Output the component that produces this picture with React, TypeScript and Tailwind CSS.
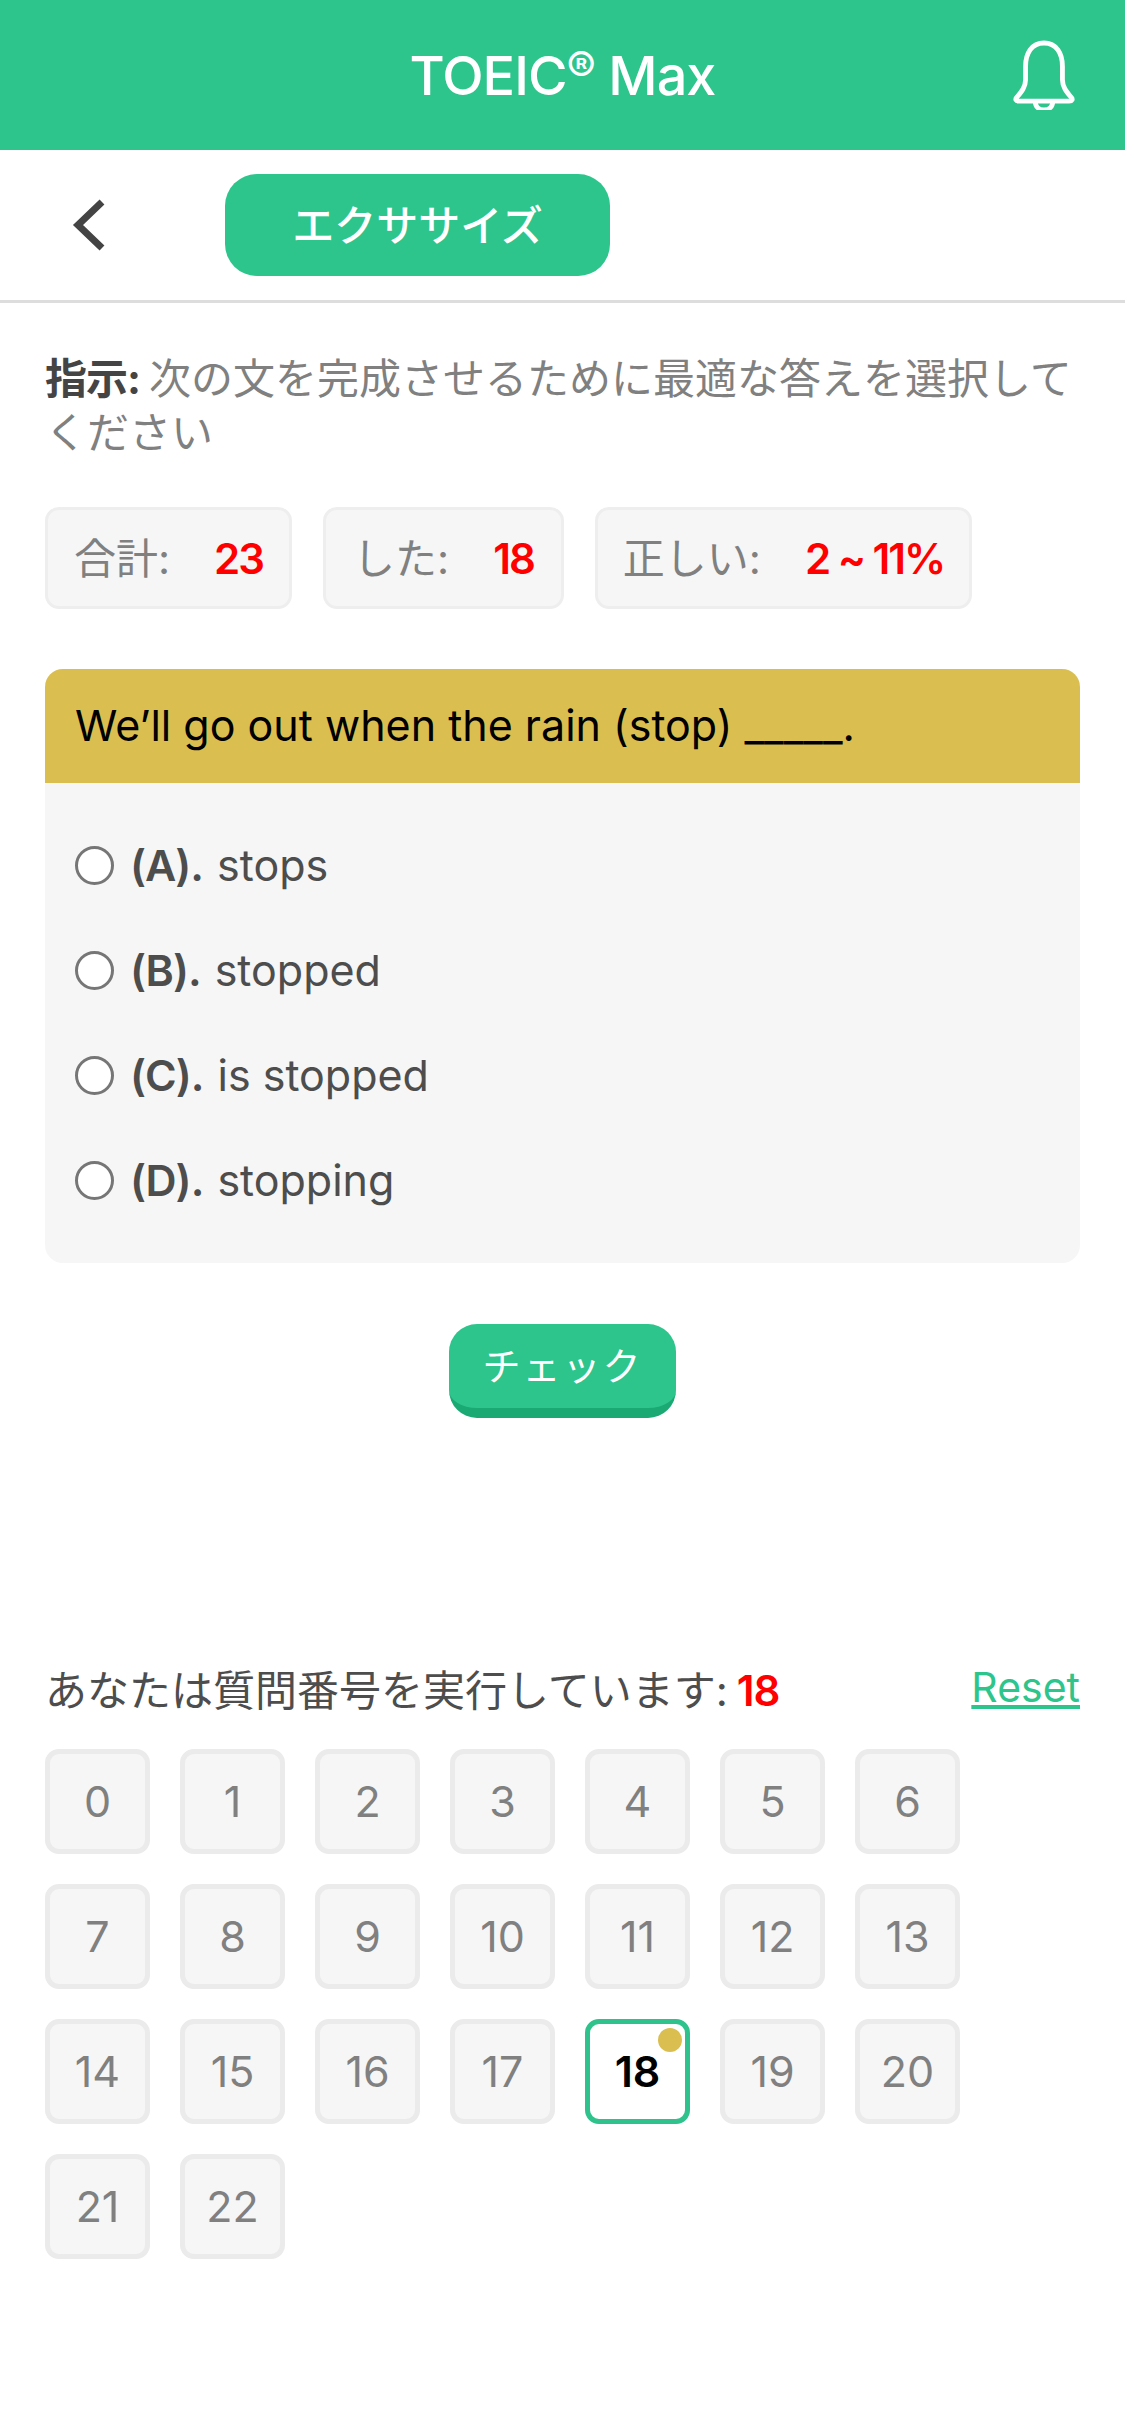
import React from 'react';

const font = "font-['Inter','Noto_Sans_CJK_JP',sans-serif]";
const options = [
  { label: '(A).', text: 'stops' },
  { label: '(B).', text: 'stopped' },
  { label: '(C).', text: 'is stopped' },
  { label: '(D).', text: 'stopping' },
];
const stats = [
  { label: '合計:', value: '23', cls: 'w-[247px]' },
  { label: 'した:', value: '18', cls: 'w-[241px]' },
  { label: '正しい:', value: '2 ~ 11%', cls: 'w-[377px]' },
];
const numbers = Array.from({ length: 23 }, (_, i) => i);

const App = () => {
  return (
    <div className={`w-[1125px] h-[2436px] bg-white overflow-hidden ${font}`}>
      {/* Header */}
      <header className="relative h-[150px] bg-[#2dc58c] flex items-center justify-center">
        <h1 className="text-[54px] font-medium text-white tracking-[-1px]">
          TOEIC<span className="text-[44px] align-[12px] leading-none">®</span> Max
        </h1>
        <svg className="absolute left-[1012px] top-[40px]" width="64" height="70" viewBox="0 0 66 72" fill="none" stroke="white" strokeWidth="5" strokeLinejoin="round">
          <path d="M33 3C20 3 14 14 14 27v14c0 7-4 12-9 18-2 2-1 4 2 4h52c3 0 4-2 2-4-5-6-9-11-9-18V27C52 14 46 3 33 3Z" />
          <path d="M24 63c0 6 4 9 9 9s9-3 9-9" />
        </svg>
      </header>

      {/* Sub nav */}
      <nav className="h-[153px] border-b-[3px] border-[#dddddd] flex items-center">
        <svg className="ml-[72px]" width="34" height="52" viewBox="0 0 34 52" fill="none" stroke="#444444" strokeWidth="7">
          <path d="M30 3L6 26l24 23" />
        </svg>
        <div className="ml-[119px] w-[385px] h-[102px] rounded-[32px] bg-[#2dc58c] flex items-center justify-center text-white text-[42px] font-medium">
          エクササイズ
        </div>
      </nav>

      <main className="px-[45px]">
        <p className="mt-[49px] text-[42px] leading-[54px] text-[#808080]">
          <b className="text-[#444444] font-bold tracking-[-1px]">指示:</b>
          <span className="ml-[9px]">次の文を完成させるために最適な答えを選択してください</span>
        </p>

        <div className="mt-[47px] flex gap-[31px]">
          {stats.map((s) => (
            <div key={s.label} className={`${s.cls} h-[102px] rounded-[14px] bg-[#f6f6f6] border-[3px] border-[#eeeeee] flex items-center justify-center gap-[44px] text-[42px]`}>
              <span className="text-[#808080]">{s.label}</span>
              <span className="text-[#ff0000] font-semibold tracking-[-2px]">{s.value}</span>
            </div>
          ))}
        </div>

        {/* Question card */}
        <section className="mt-[60px] rounded-[18px] bg-[#f6f6f6] overflow-hidden">
          <div className="h-[114px] bg-[#dbbe50] pl-[30px] pb-[2px] flex items-center text-[43px] text-black">
            We’ll go out when the rain (stop) _____.
          </div>
          <div className="pt-[30px] pb-[30px] pl-[30px] flex flex-col">
            {options.map((o) => (
              <label key={o.label} className="h-[105px] flex items-center text-[#4d4d4d] text-[43px]">
                <span className="w-[39px] h-[39px] rounded-full border-[3px] border-[#767676] bg-white" />
                <b className="ml-[16px] font-semibold tracking-[-1px]">{o.label}</b>
                <span className="ml-[14px]">{o.text}</span>
              </label>
            ))}
          </div>
        </section>

        <div className="mt-[61px] flex justify-center">
          <button className="w-[227px] h-[94px] rounded-[28px] bg-[#2dc58c] border-b-[10px] border-[#1aa873] text-white text-[38px] tracking-[2px]">
            チェック
          </button>
        </div>

        {/* Question numbers */}
        <div className="mt-[241px] flex items-start justify-between">
          <p className="mt-[4px] text-[42px] leading-[56px] text-[#4d4d4d]">
            あなたは質問番号を実行しています:<span className="ml-[9px] text-[#ff0000] font-semibold tracking-[-1px]">18</span>
          </p>
          <a className="text-[41px] leading-[56px] text-[#2dc58c] underline">Reset</a>
        </div>

        <div className="mt-[30px] grid grid-cols-[repeat(7,105px)] gap-[30px]">
          {numbers.map((n) =>
            n === 18 ? (
              <div key={n} className="relative h-[105px] rounded-[14px] bg-white border-[5px] border-[#2fc28c] flex items-center justify-center text-[43px] font-semibold text-black">
                {n}
                <span className="absolute top-[4px] right-[3px] w-[24px] h-[24px] rounded-full bg-[#dbbe50]" />
              </div>
            ) : (
              <div key={n} className="h-[105px] rounded-[14px] bg-[#f6f6f6] border-[5px] border-[#ebebeb] flex items-center justify-center text-[43px] text-[#808080]">
                {n}
              </div>
            ),
          )}
        </div>
      </main>
    </div>
  );
};

export default App;
